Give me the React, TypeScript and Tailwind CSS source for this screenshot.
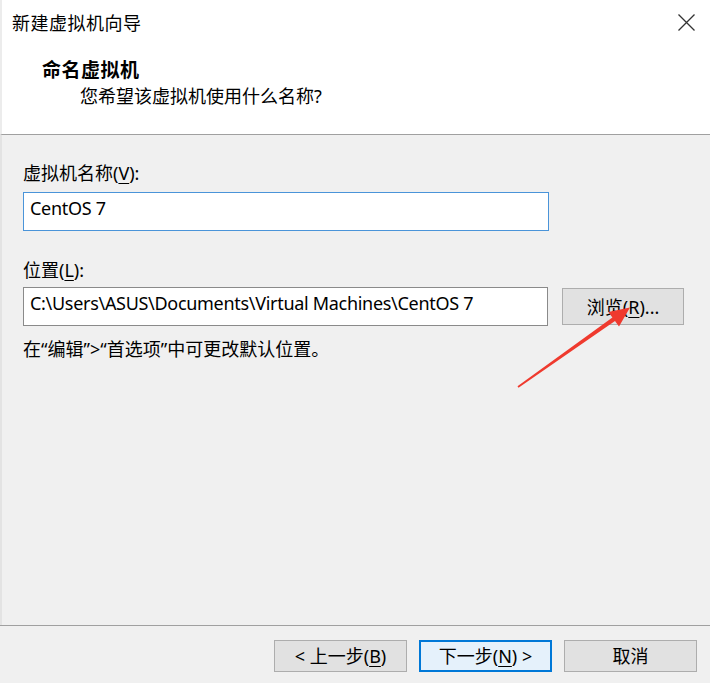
import React from "react";

const FONT = {
  fontFamily:
    '"Noto Sans", "Noto Sans CJK SC", "Microsoft YaHei", sans-serif',
};

function Btn({
  children,
  primary,
  className = "",
}: {
  children: React.ReactNode;
  primary?: boolean;
  className?: string;
}) {
  return (
    <div
      className={
        "flex items-center justify-center text-[18px] text-black leading-none " +
        (primary
          ? "border-2 border-[#0078d7] bg-[#e5f1fb] "
          : "border border-[#adadad] bg-[#e1e1e1] ") +
        className
      }
    >
      {children}
    </div>
  );
}

export default function App() {
  return (
    <div
      className="relative flex h-[683px] w-[710px] flex-col overflow-hidden bg-[#f0f0f0] text-black"
      style={FONT}
    >
      {/* Title bar + header */}
      <div className="flex h-[135px] flex-col border-b border-[#a0a0a0] border-l-2 border-l-[#ececec] bg-white">
        <div className="flex h-[46px] items-center justify-between pl-[10px] pr-[14px]">
          <span className="text-[18px] leading-none tracking-[0.5px]">新建虚拟机向导</span>
          <svg width="19" height="19" viewBox="0 0 19 19" className="mt-[-2px]">
            <path d="M1.5 1.5 L17.5 17.5 M17.5 1.5 L1.5 17.5" stroke="#333" strokeWidth="1.3" fill="none" />
          </svg>
        </div>
        <div className="pl-[40px] pt-[12px] text-[19px] font-bold leading-[24px] tracking-[0.5px]">
          命名虚拟机
        </div>
        <div className="pl-[78px] pt-[2px] text-[18px] leading-[24px]">
          您希望该虚拟机使用什么名称?
        </div>
      </div>

      {/* Body */}
      <div className="flex flex-1 flex-col border-l-2 border-l-[#e3e3e3] pl-[21px] pr-[26px]">
        <div className="mt-[26px] text-[18px] leading-[24px]">
          虚拟机名称(<span className="underline underline-offset-[3px]">V</span>):
        </div>
        <div className="mt-[7px] flex h-[39px] w-[526px] items-center border border-[#4a94d9] bg-white pb-[7px] pl-[6px] text-[18px] tracking-[-0.3px]">
          CentOS 7
        </div>
        <div className="mt-[27px] text-[18px] leading-[24px]">
          位置(<span className="underline underline-offset-[3px]">L</span>):
        </div>
        <div className="mt-[5px] flex items-center gap-[14px]">
          <div className="flex h-[39px] w-[526px] items-center border border-[#8a8a8a] bg-white pb-[7px] pl-[6px] text-[18px] tracking-[-0.3px]">
            C:\Users\ASUS\Documents\Virtual Machines\CentOS 7
          </div>
          <Btn className="h-[37px] w-[122px]">
            浏览(<span className="underline underline-offset-[3px]">R</span>)...
          </Btn>
        </div>
        <div className="mt-[11px] text-[18px] leading-[24px]">
          在“编辑”&gt;“首选项”中可更改默认位置。
        </div>
      </div>

      {/* Footer */}
      <div className="flex h-[58px] justify-end gap-[12px] border-t border-[#a0a0a0] pr-[13px] pt-[14px]">
        <Btn className="h-[32px] w-[133px]">
          &lt; 上一步(<span className="underline underline-offset-[3px]">B</span>)
        </Btn>
        <Btn primary className="h-[32px] w-[133px]">
          下一步(<span className="underline underline-offset-[3px]">N</span>) &gt;
        </Btn>
        <Btn className="h-[32px] w-[133px]">取消</Btn>
      </div>

      {/* Red annotation arrow (overlay) */}
      <svg
        className="pointer-events-none absolute left-0 top-0"
        width="710"
        height="683"
        viewBox="0 0 710 683"
      >
        <polygon
          points="517.5,386.3 612.4,317.4 608.4,311.9 630,307.5 619,326.5 615,321 518.5,387.7"
          fill="#ef3a2e"
        />
      </svg>
    </div>
  );
}
